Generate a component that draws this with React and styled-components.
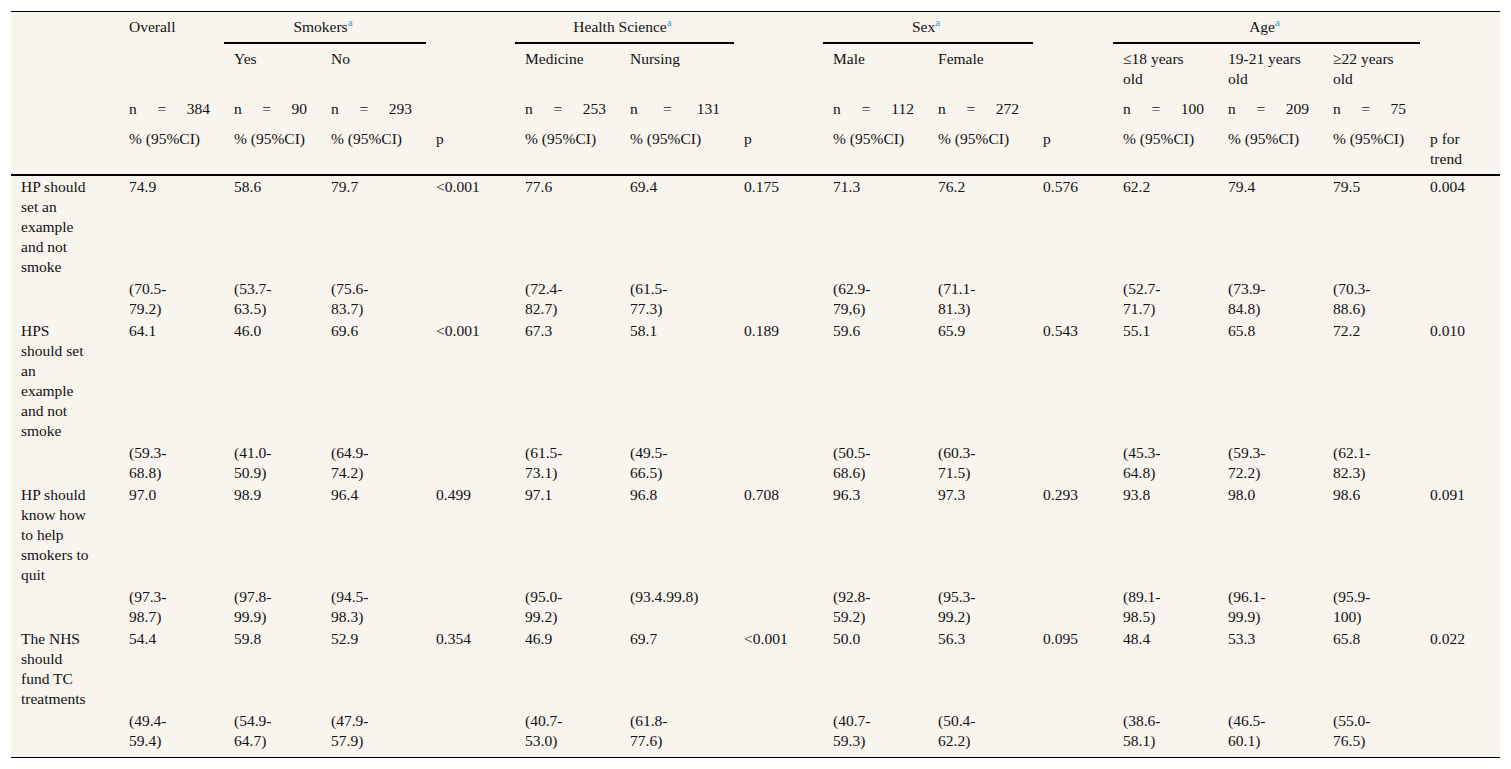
import React from "react";
import styled, { createGlobalStyle } from "styled-components";

const GlobalStyle = createGlobalStyle`
  body {
    margin: 0;
    background: #ffffff;
    font-family: "Liberation Serif", "Times New Roman", serif;
  }
`;

const Page = styled.div`
  padding: 11px 0 0 11px;
`;

const Table = styled.table`
  width: 1489px;
  table-layout: fixed;
  border-collapse: collapse;
  background: #f8f5ef;
  color: #111;
  font-size: 15.5px;
  line-height: 20px;
  border-top: 1px solid #000;
  border-bottom: 1px solid #000;
`;

const Head = styled.thead`
  border-bottom: 2px solid #000;
`;

const Th = styled.th`
  font-weight: normal;
  text-align: ${(p) => (p.$center ? "center" : "left")};
  vertical-align: top;
  padding: 5px 14px 5px 10px;
  border-bottom: ${(p) => (p.$rule ? "2px solid #000" : "none")};
`;

const Count = styled.span`
  display: flex;
  justify-content: space-between;
`;

const Sup = styled.sup`
  font-size: 0.72em;
  line-height: 0;
  vertical-align: 0.55em;
  color: #3d9bd8;
`;

const Row = styled.tr`
  &:last-child td {
    padding-bottom: 6px;
  }
`;

const Td = styled.td`
  vertical-align: top;
  padding: 1px 14px 1px 10px;
`;

const Label = styled(Td)`
  padding-right: 28px;
`;

const widths = [108, 105, 97, 105, 89, 105, 114, 89, 105, 105, 80, 105, 105, 97, 80];

const groups = [
  { title: "Smokers", subs: ["Yes", "No"], n: [90, 293] },
  { title: "Health Science", subs: ["Medicine", "Nursing"], n: [253, 131] },
  { title: "Sex", subs: ["Male", "Female"], n: [112, 272] },
  { title: "Age", subs: ["≤18 years old", "19-21 years old", "≥22 years old"], n: [100, 209, 75], trend: true },
];

const rows = [
  {
    label: "HP should set an example and not smoke",
    values: ["74.9", "58.6", "79.7", "<0.001", "77.6", "69.4", "0.175", "71.3", "76.2", "0.576", "62.2", "79.4", "79.5", "0.004"],
    ci: ["(70.5-79.2)", "(53.7-63.5)", "(75.6-83.7)", "", "(72.4-82.7)", "(61.5-77.3)", "", "(62.9-79,6)", "(71.1-81.3)", "", "(52.7-71.7)", "(73.9-84.8)", "(70.3-88.6)", ""],
  },
  {
    label: "HPS should set an example and not smoke",
    values: ["64.1", "46.0", "69.6", "<0.001", "67.3", "58.1", "0.189", "59.6", "65.9", "0.543", "55.1", "65.8", "72.2", "0.010"],
    ci: ["(59.3-68.8)", "(41.0-50.9)", "(64.9-74.2)", "", "(61.5-73.1)", "(49.5-66.5)", "", "(50.5-68.6)", "(60.3-71.5)", "", "(45.3-64.8)", "(59.3-72.2)", "(62.1-82.3)", ""],
  },
  {
    label: "HP should know how to help smokers to quit",
    values: ["97.0", "98.9", "96.4", "0.499", "97.1", "96.8", "0.708", "96.3", "97.3", "0.293", "93.8", "98.0", "98.6", "0.091"],
    ci: ["(97.3-98.7)", "(97.8-99.9)", "(94.5-98.3)", "", "(95.0-99.2)", "(93.4.99.8)", "", "(92.8-59.2)", "(95.3-99.2)", "", "(89.1-98.5)", "(96.1-99.9)", "(95.9-100)", ""],
  },
  {
    label: "The NHS should fund TC treatments",
    values: ["54.4", "59.8", "52.9", "0.354", "46.9", "69.7", "<0.001", "50.0", "56.3", "0.095", "48.4", "53.3", "65.8", "0.022"],
    ci: ["(49.4-59.4)", "(54.9-64.7)", "(47.9-57.9)", "", "(40.7-53.0)", "(61.8-77.6)", "", "(40.7-59.3)", "(50.4-62.2)", "", "(38.6-58.1)", "(46.5-60.1)", "(55.0-76.5)", ""],
  },
];

const Interval = ({ text }) => {
  if (!text.includes("-")) return text;
  const [lo, hi] = text.split("-");
  return (
    <>
      {lo}-
      <br />
      {hi}
    </>
  );
};

const N = ({ value }) => (
  <Count>
    <span>n</span>
    <span>=</span>
    <span>{value}</span>
  </Count>
);

const App = () => {
  return (
    <Page>
      <GlobalStyle />
      <Table>
        <colgroup>
          {widths.map((w, i) => (
            <col key={i} style={{ width: w }} />
          ))}
        </colgroup>
        <Head>
          <tr>
            <Th />
            <Th>Overall</Th>
            {groups.map((g) => (
              <React.Fragment key={g.title}>
                <Th $center $rule colSpan={g.subs.length}>
                  {g.title}
                  <Sup>a</Sup>
                </Th>
                <Th />
              </React.Fragment>
            ))}
          </tr>
          <tr>
            <Th />
            <Th />
            {groups.map((g) => (
              <React.Fragment key={g.title}>
                {g.subs.map((s) => (
                  <Th key={s}>{s}</Th>
                ))}
                <Th />
              </React.Fragment>
            ))}
          </tr>
          <tr>
            <Th />
            <Th>
              <N value={384} />
            </Th>
            {groups.map((g) => (
              <React.Fragment key={g.title}>
                {g.n.map((n, i) => (
                  <Th key={i}>
                    <N value={n} />
                  </Th>
                ))}
                <Th />
              </React.Fragment>
            ))}
          </tr>
          <tr>
            <Th />
            <Th>% (95%CI)</Th>
            {groups.map((g) => (
              <React.Fragment key={g.title}>
                {g.subs.map((s) => (
                  <Th key={s}>% (95%CI)</Th>
                ))}
                <Th>{g.trend ? "p for trend" : "p"}</Th>
              </React.Fragment>
            ))}
          </tr>
        </Head>
        <tbody>
          {rows.map((r) => (
            <React.Fragment key={r.label}>
              <Row>
                <Label>{r.label}</Label>
                {r.values.map((v, i) => (
                  <Td key={i}>{v}</Td>
                ))}
              </Row>
              <Row>
                <Label />
                {r.ci.map((c, i) => (
                  <Td key={i}>
                    <Interval text={c} />
                  </Td>
                ))}
              </Row>
            </React.Fragment>
          ))}
        </tbody>
      </Table>
    </Page>
  );
};

export default App;
